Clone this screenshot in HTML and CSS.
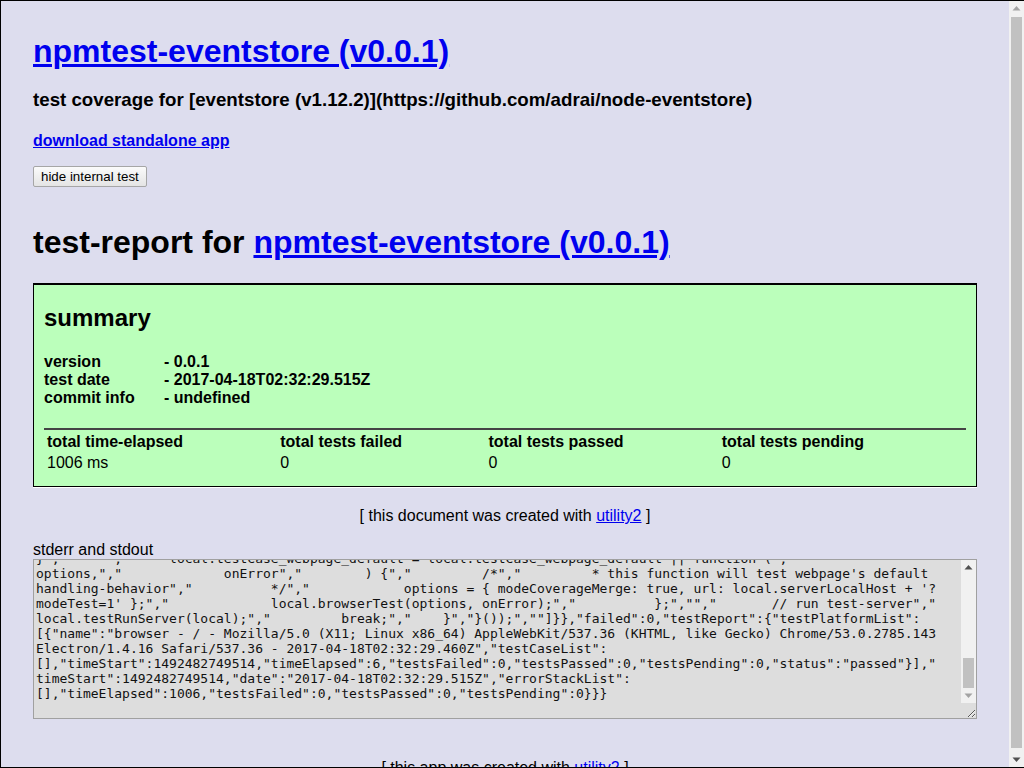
FILE: index.html
```
<!DOCTYPE html>
<html lang="en">
<head>
<meta charset="utf-8">
<title>npmtest-eventstore (v0.0.1)</title>
<link rel="stylesheet" href="styles.css">
</head>
<body>
<div class="frame">
<div class="page">
<h1 class="title"><a href="#">npmtest-eventstore (v0.0.1)</a></h1>
<h3 class="desc">test coverage for [eventstore (v1.12.2)](https://github.com/adrai/node-eventstore)</h3>
<h4 class="download"><a href="#">download standalone app</a></h4>
<div class="controls"><button class="btn" type="button">hide internal test</button></div>
<div class="report">
<h1 class="report-title">test-report for <a href="#">npmtest-eventstore (v0.0.1)</a></h1>
<div class="summary">
<h2 class="summary-title">summary</h2>
<h4 class="meta">
<span class="meta-key">version</span>- 0.0.1<br>
<span class="meta-key">test date</span>- 2017-04-18T02:32:29.515Z<br>
<span class="meta-key">commit info</span>- undefined<br>
</h4>
<table class="totals">
<thead>
<tr><th class="c1">total time-elapsed</th><th class="c2">total tests failed</th><th class="c3">total tests passed</th><th class="c4">total tests pending</th></tr>
</thead>
<tbody>
<tr><td>1006 ms</td><td>0</td><td>0</td><td>0</td></tr>
</tbody>
</table>
</div>
</div>
<div class="footer">[ this document was created with <a href="#">utility2</a> ]</div>
<label class="out-label" for="out">stderr and stdout</label>
<div class="output-wrap">
<textarea id="out" class="output" readonly>npmtest-eventstore - 2017-04-18T02:32:28.247Z - (npm test) - starting test-runner ...
[MODE_BUILD=test] - 2017-04-18T02:32:28.252Z - (test.js) - init local ...
[MODE_BUILD=test] - 2017-04-18T02:32:28.311Z - (test.js) - loading module eventstore (v1.12.2) ...
[MODE_BUILD=test] - 2017-04-18T02:32:28.402Z - http-server listening on port 8081
[MODE_BUILD=test] - 2017-04-18T02:32:28.409Z - browserTest - 1 - opening url http://127.0.0.1:8081/?modeTest=1
[MODE_BUILD=test] - 2017-04-18T02:32:28.913Z - browserTest - 2 - electron - window created
[MODE_BUILD=test] - 2017-04-18T02:32:29.387Z - browserTest - 3 - page loaded - running internal test ...

    1 test-case - 0 failed - 0 pending - 1 passed - (browser - /)
    1 test-case - 0 failed - 0 pending - 1 passed - (node - 2017-04-18T02:32:29.515Z)

[MODE_BUILD=test] - 2017-04-18T02:32:29.462Z - browserTest - 4 - merging test-report ...
{"coverage":null,"testCaseDict":{"testCase_webpage_default":["function (","            options,","            onError",
"        ) {","        /*","         * this function will test webpage's default handling-behavior","         */",
"            options = { modeCoverageMerge: true, url: local.serverLocalHost + '?modeTest=1' };","            local.
browserTest(options, onError);","        };"]},"local":{"env":{"npm_package_name":"npmtest-eventstore",
"npm_package_version":"0.0.1","npm_package_description":"test coverage for [eventstore (v1.12.2)](https://github.com/
adrai/node-eventstore)","npm_package_homepage":"https://github.com/npmtest/node-npmtest-eventstore"},"source":
["/*jslint","    bitwise: true,","    browser: true,","    maxerr: 8,","    maxlen: 96,","    node: true,","    nomen:
true,","    regexp: true,","    stupid: true","*/","(function () {","    'use strict';","    var local;","","    // run
shared js-env code - init-before","    (function () {","        // init local","        local = {};","        // init
modeJs","        local.modeJs = (function () {","            try {","                return typeof navigator.userAgent
=== 'string' &amp;&amp;","                    typeof document.querySelector('body') === 'object' &amp;&amp;","                    typeof
XMLHttpRequest.prototype.open === 'function' &amp;&amp;","                    'browser';","            } catch (errorCaughtBrowser)
{","                return module.exports &amp;&amp;","                    typeof process.versions.node === 'string' &amp;&amp;",
"    }());","","","","    // run shared js-env code - function","    (function () {","        local.testCase_webpage",
"_default = local.testCase_webpage_default || function (","        // coverage-hack - test default handling-behavior",
}","     ","     local.testCase_webpage_default = local.testCase_webpage_default || function (",
options,","             onError","        ) {","         /*","         * this function will test webpage's default
handling-behavior","          */","            options = { modeCoverageMerge: true, url: local.serverLocalHost + '?
modeTest=1' };","             local.browserTest(options, onError);","          };","","       // run test-server","
local.testRunServer(local);","         break;","    }","}());",""]}},"failed":0,"testReport":{"testPlatformList":
[{"name":"browser - / - Mozilla/5.0 (X11; Linux x86_64) AppleWebKit/537.36 (KHTML, like Gecko) Chrome/53.0.2785.143
Electron/1.4.16 Safari/537.36 - 2017-04-18T02:32:29.460Z","testCaseList":
[],"timeStart":1492482749514,"timeElapsed":6,"testsFailed":0,"testsPassed":0,"testsPending":0,"status":"passed"}],"
timeStart":1492482749514,"date":"2017-04-18T02:32:29.515Z","errorStackList":
[],"timeElapsed":1006,"testsFailed":0,"testsPassed":0,"testsPending":0}}}
</textarea>
<div class="vscroll ta-scroll" aria-hidden="true">
<svg class="sb-arrow sb-active" viewBox="0 0 15 15" width="15" height="15"><path d="M3.5 9.5h8l-4-4.5z"/></svg>
<div class="sb-track"><div class="sb-thumb"></div></div>
<svg class="sb-arrow" viewBox="0 0 15 15" width="15" height="15"><path d="M3.5 5.5h8l-4 4.5z"/></svg>
</div>
</div>
<div class="footer footer-app">[ this app was created with <a href="#">utility2</a> ]</div>
</div>
</div>
<div class="vscroll page-scroll" aria-hidden="true">
<svg class="sb-arrow" viewBox="0 0 15 15" width="15" height="15"><path d="M3.5 9.5h8l-4-4.5z"/></svg>
<div class="sb-track"><div class="sb-thumb"></div></div>
<svg class="sb-arrow sb-active" viewBox="0 0 15 15" width="15" height="15"><path d="M3.5 5.5h8l-4 4.5z"/></svg>
</div>
<script src="script.js"></script>
</body>
</html>
```
FILE: styles.css
```
html, body {
  margin: 0;
  padding: 0;
  height: 100%;
}
body {
  background: #dde;
  color: #000;
  font-family: "Liberation Sans", Arial, Helvetica, sans-serif;
  font-size: 16px;
}
a {
  color: #00e;
}
.frame {
  box-sizing: border-box;
  height: 100vh;
  border: 1px solid #000;
  border-right: 0;
  padding-right: 15px;
  overflow-y: scroll;
  background: #dde;
}
.page {
  margin: 32px;
}
.title {
  font-size: 32px;
  margin: 0 0 16px;
}
.desc {
  font-size: 18.72px;
  margin: 18.72px 0 16px;
}
.download {
  font-size: 16px;
  margin: 21.28px 0 16px;
}
.controls {
  display: flex;
  margin: 0 0 16px;
}
.btn {
  font-family: "Liberation Sans", Arial, sans-serif;
  font-size: 13.333px;
  color: #000;
  padding: 2px 7px;
  border: 1px solid #a6a6a6;
  border-radius: 2px;
  background: linear-gradient(#fbfbfb, #e4e4e4);
  line-height: normal;
}
.report {
  margin: 0 0 16px;
}
.report-title {
  font-size: 32px;
  margin: 37.44px 0 21.44px;
}
.summary {
  background: #bfb;
  border: 1px solid #000;
  border-top-width: 2px;
  padding: 0 10px 11px;
  box-shadow: 0 1px 0 #fff;
}
.summary-title {
  font-size: 24px;
  margin: 18.92px 0 19.92px;
}
.meta {
  font-size: 16px;
  margin: 21.28px 0;
}
.meta-key {
  display: inline-block;
  width: 120px;
}
.totals {
  width: 100%;
  table-layout: fixed;
  border-top: 2px solid #444;
  border-spacing: 2px 3px;
  margin: 0;
}
.totals th,
.totals td {
  box-sizing: border-box;
  padding: 0 1px;
  text-align: left;
  font-size: 16px;
}
.totals th {
  font-weight: bold;
}
.totals td {
  font-weight: normal;
}
.c1 { width: 231px; }
.c2 { width: 206px; }
.c3 { width: 231px; }
.c4 { width: 243px; }
.footer {
  margin: 20px 0 16px;
  text-align: center;
}
.out-label {
  display: block;
}
.output-wrap {
  position: relative;
  margin: 0 0 16px;
}
.output {
  display: block;
  box-sizing: border-box;
  width: 100%;
  height: 160px;
  margin: 0;
  padding: 2px 17px 2px 2px;
  border: 1px solid #a0a0a0;
  background: #ddd;
  color: #111;
  font-family: "DejaVu Sans Mono", monospace;
  font-size: 13px;
  line-height: normal;
}
.footer-app {
  margin-top: 40px;
}

/* drawn scrollbars (overlays) */
.vscroll {
  display: flex;
  flex-direction: column;
  width: 15px;
  background: #f1f1f1;
}
.sb-arrow {
  display: block;
  flex: none;
  fill: #a3a3a3;
}
.sb-arrow.sb-active {
  fill: #505050;
}
.sb-track {
  flex: 1;
  display: flex;
  flex-direction: column;
}
.sb-thumb {
  background: #c1c1c1;
  margin: 0 2px;
}
.page-scroll {
  position: fixed;
  top: 1px;
  right: 0;
  bottom: 1px;
}
.page-scroll .sb-thumb {
  margin-top: 1px;
  height: 731px;
}
.ta-scroll {
  position: absolute;
  top: 1px;
  right: 1px;
  height: 143px;
}
.ta-scroll .sb-track {
  justify-content: flex-end;
}
.ta-scroll .sb-thumb {
  height: 30px;
}
```
FILE: script.js
```
(function () {
  var out = document.getElementById('out');
  function toBottom() {
    out.scrollTop = out.scrollHeight;
  }
  toBottom();
  window.addEventListener('load', toBottom);
}());
```
